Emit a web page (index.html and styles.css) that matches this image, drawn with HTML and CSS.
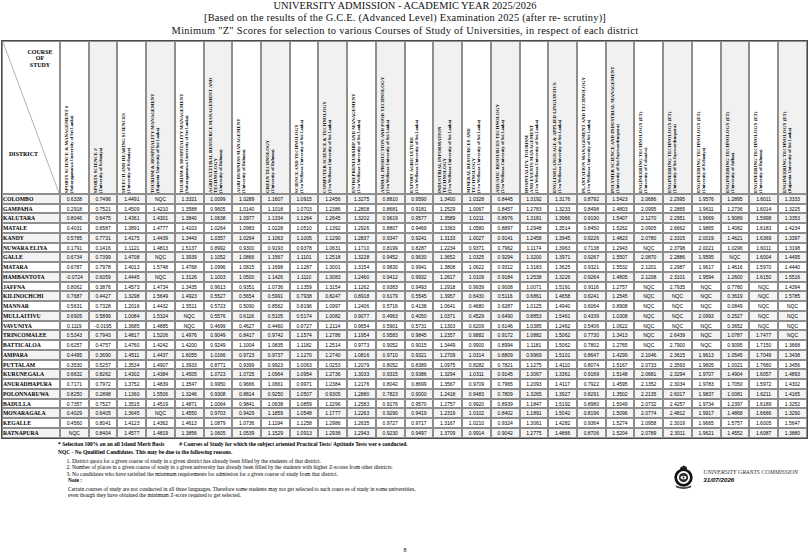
FILE: index.html
```html
<!DOCTYPE html>
<html>
<head>
<meta charset="utf-8">
<link rel="stylesheet" href="styles.css">
</head>
<body>
<div class="page">
  <div class="title">
    <div class="t1">UNIVERSITY ADMISSION - ACADEMIC YEAR 2025/2026</div>
    <div class="t2">[Based on the results of the G.C.E. (Advanced Level) Examination 2025 (after re- scrutiny)]</div>
    <div class="t3">Minimum "Z" Scores for selection to various Courses of Study of Universities, in respect of each district</div>
  </div>
  <table class="z">
    <colgroup><col class="cdist"><col span="26"></colgroup>
    <thead>
      <tr class="hd">
        <th class="corner">
          <svg class="diag" viewBox="0 0 58 153" preserveAspectRatio="none"><line x1="0" y1="0" x2="58" y2="153" stroke="#9a9a9a" stroke-width="0.8"/></svg>
          <div class="cinner">
            <div class="cos">COURSE<br>OF<br>STUDY</div>
            <div class="dis">DISTRICT</div>
          </div>
        </th>
        <th><div class="rot">SPORTS SCIENCE &amp; MANAGEMENT #<br><span class="u">(Sabaragamuwa University of Sri Lanka)</span></div></th>
        <th class="g"><div class="rot">SPORTS SCIENCE #<br><span class="u">(University of Kelaniya)</span></div></th>
        <th><div class="rot">SPEECH AND HEARING SCIENCES<br><span class="u">(University of Kelaniya)</span></div></th>
        <th class="g"><div class="rot">TOURISM &amp; HOSPITALITY MANAGEMENT<br><span class="u">(Rajarata University of Sri Lanka)</span></div></th>
        <th><div class="rot">TOURISM &amp; HOSPITALITY MANAGEMENT<br><span class="u">(Sabaragamuwa University of Sri Lanka)</span></div></th>
        <th class="g"><div class="rot">AGRICULTURAL RESOURCE MANAGEMENT AND<br>TECHNOLOGY<br><span class="u">(University of Ruhuna)</span></div></th>
        <th><div class="rot">AGRI BUSINESS MANAGEMENT<br><span class="u">(University of Ruhuna)</span></div></th>
        <th class="g"><div class="rot">GREEN TECHNOLOGY<br><span class="u">(University of Ruhuna)</span></div></th>
        <th><div class="rot">SCIENCE AND TECHNOLOGY<br><span class="u">(Uva Wellassa University of Sri Lanka)</span></div></th>
        <th class="g"><div class="rot">COMPUTER SCIENCE &amp; TECHNOLOGY<br><span class="u">(Uva Wellassa University of Sri Lanka)</span></div></th>
        <th><div class="rot">ENTREPRENEURSHIP AND MANAGEMENT<br><span class="u">(Uva Wellassa University of Sri Lanka)</span></div></th>
        <th class="g"><div class="rot">ANIMAL PRODUCTION AND FOOD TECHNOLOGY<br><span class="u">(Uva Wellassa University of Sri Lanka)</span></div></th>
        <th><div class="rot">EXPORT AGRICULTURE<br><span class="u">(Uva Wellassa University of Sri Lanka)</span></div></th>
        <th class="g"><div class="rot">INDUSTRIAL INFORMATION<br>TECHNOLOGY<br><span class="u">(Uva Wellassa University of Sri Lanka)</span></div></th>
        <th><div class="rot">MINERAL RESOURCES AND<br>TECHNOLOGY<br><span class="u">(Uva Wellassa University of Sri Lanka)</span></div></th>
        <th class="g"><div class="rot">AQUATIC RESOURCES TECHNOLOGY<br><span class="u">(Uva Wellassa University of Sri Lanka)</span></div></th>
        <th><div class="rot">HOSPITALITY, TOURISM<br>AND EVENTS MANAGEMENT<br><span class="u">(Uva Wellassa University of Sri Lanka)</span></div></th>
        <th class="g"><div class="rot">ENGLISH LANGUAGE &amp; APPLIED LINGUISTICS<br><span class="u">(Uva Wellassa University of Sri Lanka)</span></div></th>
        <th><div class="rot">PLANTATION MANAGEMENT AND TECHNOLOGY<br><span class="u">(Uva Wellassa University of Sri Lanka)</span></div></th>
        <th class="g"><div class="rot">POLYMER SCIENCE AND INDUSTRIAL MANAGEMENT<br><span class="u">(University of Sri Jayewardenepura)</span></div></th>
        <th><div class="rot">ENGINEERING TECHNOLOGY (ET)<br><span class="u">(University of Colombo)</span></div></th>
        <th class="g"><div class="rot">ENGINEERING TECHNOLOGY (ET)<br><span class="u">(University of Sri Jayewardenepura)</span></div></th>
        <th><div class="rot">ENGINEERING TECHNOLOGY (ET)<br><span class="u">(University of Kelaniya)</span></div></th>
        <th class="g"><div class="rot">ENGINEERING TECHNOLOGY (ET)<br><span class="u">(University of Jaffna)</span></div></th>
        <th><div class="rot">ENGINEERING TECHNOLOGY (ET)<br><span class="u">(University of Ruhuna)</span></div></th>
        <th class="g"><div class="rot">ENGINEERING TECHNOLOGY (ET)<br><span class="u">(Rajarata University of Sri Lanka)</span></div></th>
      </tr>
    </thead>
    <tbody>
      <tr><th>COLOMBO</th><td>0.6338</td><td>0.7496</td><td>1.4491</td><td>NQC</td><td>1.3321</td><td>1.0099</td><td>1.0289</td><td>1.1607</td><td>1.0915</td><td>1.2456</td><td>1.3275</td><td>0.8810</td><td>0.9590</td><td>1.3400</td><td>1.0328</td><td>0.8445</td><td>1.3192</td><td>1.3176</td><td>0.8792</td><td>1.5423</td><td>2.0686</td><td>2.2995</td><td>1.9576</td><td>1.2895</td><td>1.6011</td><td>1.3333</td></tr>
      <tr><th>GAMPAHA</th><td>0.2918</td><td>0.7521</td><td>1.4509</td><td>1.4210</td><td>1.3588</td><td>0.9605</td><td>1.0140</td><td>1.1018</td><td>1.0703</td><td>1.2386</td><td>1.2808</td><td>0.8681</td><td>0.9181</td><td>1.2529</td><td>1.0067</td><td>0.8457</td><td>1.2783</td><td>1.3233</td><td>0.8498</td><td>1.4803</td><td>2.0995</td><td>2.2865</td><td>1.9611</td><td>1.2736</td><td>1.6014</td><td>1.3225</td></tr>
      <tr><th>KALUTARA</th><td>0.8046</td><td>0.6475</td><td>1.4361</td><td>1.4301</td><td>1.3840</td><td>1.0638</td><td>1.0977</td><td>1.1334</td><td>1.1264</td><td>1.2645</td><td>1.3202</td><td>0.9619</td><td>0.9577</td><td>1.3589</td><td>1.0211</td><td>0.8976</td><td>1.3181</td><td>1.3966</td><td>0.9190</td><td>1.5407</td><td>2.1270</td><td>2.2951</td><td>1.9669</td><td>1.9089</td><td>1.5998</td><td>1.3353</td></tr>
      <tr><th>MATALE</th><td>0.4031</td><td>0.6587</td><td>1.3891</td><td>1.4777</td><td>1.4103</td><td>1.0264</td><td>1.0983</td><td>1.0228</td><td>1.0510</td><td>1.1392</td><td>1.2926</td><td>0.8807</td><td>0.9469</td><td>1.3363</td><td>1.0580</td><td>0.8897</td><td>1.2948</td><td>1.3514</td><td>0.8450</td><td>1.5262</td><td>2.0905</td><td>2.6662</td><td>1.9865</td><td>1.4082</td><td>1.6183</td><td>1.4234</td></tr>
      <tr><th>KANDY</th><td>0.5785</td><td>0.7731</td><td>1.4175</td><td>1.4439</td><td>1.3443</td><td>1.0357</td><td>1.0264</td><td>1.1063</td><td>1.1005</td><td>1.1290</td><td>1.2837</td><td>0.9347</td><td>0.9241</td><td>1.3133</td><td>1.0027</td><td>0.9141</td><td>1.2458</td><td>1.3945</td><td>0.9226</td><td>1.4823</td><td>2.0780</td><td>2.3315</td><td>2.0019</td><td>1.4621</td><td>1.6369</td><td>1.3397</td></tr>
      <tr><th>NUWARA ELIYA</th><td>0.1791</td><td>0.1416</td><td>1.1121</td><td>1.4813</td><td>1.5137</td><td>0.8992</td><td>0.9300</td><td>0.9193</td><td>0.9378</td><td>1.0631</td><td>1.1710</td><td>0.8199</td><td>0.8287</td><td>1.2234</td><td>0.9371</td><td>0.7962</td><td>1.1174</td><td>1.3963</td><td>0.7138</td><td>1.2943</td><td>NQC</td><td>2.3798</td><td>2.0021</td><td>1.0296</td><td>1.6011</td><td>1.3198</td></tr>
      <tr><th>GALLE</th><td>0.6734</td><td>0.7399</td><td>1.4708</td><td>NQC</td><td>1.3939</td><td>1.1052</td><td>1.0866</td><td>1.1567</td><td>1.1101</td><td>1.2518</td><td>1.3228</td><td>0.9452</td><td>0.9630</td><td>1.3652</td><td>1.0325</td><td>0.9294</td><td>1.3200</td><td>1.3971</td><td>0.9267</td><td>1.5507</td><td>2.0870</td><td>2.2886</td><td>1.9595</td><td>NQC</td><td>1.6004</td><td>1.4495</td></tr>
      <tr><th>MATARA</th><td>0.6787</td><td>0.7978</td><td>1.4013</td><td>1.5748</td><td>1.4768</td><td>1.0996</td><td>1.0815</td><td>1.1698</td><td>1.1287</td><td>1.3001</td><td>1.3154</td><td>0.9830</td><td>0.9941</td><td>1.3808</td><td>1.0622</td><td>0.9312</td><td>1.3183</td><td>1.3625</td><td>0.9321</td><td>1.5532</td><td>2.1201</td><td>2.2987</td><td>1.9617</td><td>1.4616</td><td>1.5970</td><td>1.4440</td></tr>
      <tr><th>HAMBANTOTA</th><td>-0.0724</td><td>0.6059</td><td>1.4445</td><td>NQC</td><td>1.3126</td><td>1.1003</td><td>1.0500</td><td>1.1426</td><td>1.1110</td><td>1.3083</td><td>1.2460</td><td>0.9412</td><td>0.9932</td><td>1.2617</td><td>1.0109</td><td>0.9184</td><td>1.2538</td><td>1.3226</td><td>0.9264</td><td>1.4805</td><td>2.1208</td><td>2.3101</td><td>1.9594</td><td>1.2600</td><td>1.6150</td><td>1.5516</td></tr>
      <tr><th>JAFFNA</th><td>0.8062</td><td>0.3876</td><td>1.4573</td><td>1.4734</td><td>1.3435</td><td>0.9613</td><td>0.9351</td><td>1.0736</td><td>1.1359</td><td>1.3154</td><td>1.1262</td><td>0.9383</td><td>0.9493</td><td>1.2918</td><td>0.9939</td><td>0.9008</td><td>1.0071</td><td>1.5191</td><td>0.9116</td><td>1.2757</td><td>NQC</td><td>2.7935</td><td>NQC</td><td>0.7780</td><td>NQC</td><td>1.4394</td></tr>
      <tr><th>KILINOCHCHI</th><td>0.7687</td><td>0.4427</td><td>1.3298</td><td>1.5649</td><td>1.4923</td><td>0.5527</td><td>0.5654</td><td>0.5991</td><td>0.7938</td><td>0.8247</td><td>0.8918</td><td>0.6179</td><td>0.5545</td><td>1.3957</td><td>0.6430</td><td>0.5116</td><td>0.6861</td><td>1.4658</td><td>0.6241</td><td>1.2545</td><td>NQC</td><td>NQC</td><td>NQC</td><td>0.3619</td><td>NQC</td><td>1.5785</td></tr>
      <tr><th>MANNAR</th><td>0.5631</td><td>0.7328</td><td>1.2016</td><td>1.4432</td><td>1.5511</td><td>0.5723</td><td>0.5090</td><td>0.8562</td><td>0.8196</td><td>1.0997</td><td>1.2406</td><td>0.5716</td><td>0.4138</td><td>1.0641</td><td>0.4680</td><td>0.6287</td><td>1.0125</td><td>1.4940</td><td>0.6064</td><td>0.8908</td><td>NQC</td><td>NQC</td><td>NQC</td><td>0.0849</td><td>NQC</td><td>NQC</td></tr>
      <tr><th>MULLAITIVU</th><td>0.6905</td><td>0.5899</td><td>1.0084</td><td>1.5324</td><td>NQC</td><td>0.5576</td><td>0.6116</td><td>0.5105</td><td>0.5174</td><td>1.0082</td><td>0.9077</td><td>0.4963</td><td>0.4050</td><td>1.0371</td><td>0.4529</td><td>0.6490</td><td>0.8853</td><td>1.5461</td><td>0.4339</td><td>1.0308</td><td>NQC</td><td>NQC</td><td>2.0993</td><td>0.2527</td><td>NQC</td><td>NQC</td></tr>
      <tr><th>VAVUNIYA</th><td>0.1119</td><td>-0.0195</td><td>1.3685</td><td>1.4885</td><td>NQC</td><td>0.4699</td><td>0.4627</td><td>0.4460</td><td>0.9727</td><td>1.2114</td><td>0.9654</td><td>0.5901</td><td>0.5731</td><td>1.1303</td><td>0.6209</td><td>0.6146</td><td>1.0385</td><td>1.2462</td><td>0.5406</td><td>1.0622</td><td>NQC</td><td>NQC</td><td>NQC</td><td>0.3652</td><td>NQC</td><td>NQC</td></tr>
      <tr><th>TRINCOMALEE</th><td>0.5343</td><td>0.7943</td><td>1.4817</td><td>1.5206</td><td>1.4976</td><td>0.9049</td><td>0.8417</td><td>0.9742</td><td>1.1574</td><td>1.2786</td><td>1.1954</td><td>0.9583</td><td>0.9845</td><td>1.2357</td><td>0.9882</td><td>0.9172</td><td>1.0882</td><td>1.5062</td><td>0.7730</td><td>1.3413</td><td>NQC</td><td>2.6439</td><td>NQC</td><td>1.0787</td><td>1.7477</td><td>NQC</td></tr>
      <tr><th>BATTICALOA</th><td>0.6257</td><td>0.4757</td><td>1.4760</td><td>1.4242</td><td>1.4200</td><td>0.9249</td><td>1.1004</td><td>1.0835</td><td>1.1182</td><td>1.2514</td><td>0.9773</td><td>0.9052</td><td>0.9015</td><td>1.3449</td><td>0.9900</td><td>0.8994</td><td>1.1181</td><td>1.5062</td><td>0.7802</td><td>1.2765</td><td>NQC</td><td>2.7900</td><td>NQC</td><td>0.9095</td><td>1.7150</td><td>1.3668</td></tr>
      <tr><th>AMPARA</th><td>0.4495</td><td>0.3690</td><td>1.4511</td><td>1.4437</td><td>1.6055</td><td>1.0166</td><td>0.9723</td><td>0.9737</td><td>1.1270</td><td>1.2740</td><td>1.0816</td><td>0.9710</td><td>0.9321</td><td>1.2709</td><td>1.0314</td><td>0.8809</td><td>0.9969</td><td>1.5101</td><td>0.8647</td><td>1.4299</td><td>2.1046</td><td>2.3615</td><td>1.9613</td><td>1.0545</td><td>1.7049</td><td>1.3438</td></tr>
      <tr><th>PUTTALAM</th><td>0.3530</td><td>0.5257</td><td>1.3534</td><td>1.4907</td><td>1.3933</td><td>0.8771</td><td>0.9399</td><td>0.9923</td><td>1.0063</td><td>1.0253</td><td>1.2079</td><td>0.8052</td><td>0.8389</td><td>1.0975</td><td>0.8282</td><td>0.7821</td><td>1.1275</td><td>1.4110</td><td>0.8074</td><td>1.5167</td><td>2.0733</td><td>2.3593</td><td>1.9605</td><td>1.0021</td><td>1.7660</td><td>1.3456</td></tr>
      <tr><th>KURUNEGALA</th><td>0.6632</td><td>0.8262</td><td>1.4302</td><td>1.4384</td><td>1.4505</td><td>1.0723</td><td>1.0725</td><td>1.0964</td><td>1.0954</td><td>1.2736</td><td>1.3033</td><td>0.9315</td><td>0.9386</td><td>1.3294</td><td>1.0311</td><td>0.9145</td><td>1.3067</td><td>1.3361</td><td>0.9169</td><td>1.5148</td><td>2.0681</td><td>2.3294</td><td>1.9707</td><td>1.4904</td><td>1.6057</td><td>1.4893</td></tr>
      <tr><th>ANURADHAPURA</th><td>0.7171</td><td>0.7972</td><td>1.3752</td><td>1.4839</td><td>1.3547</td><td>0.9950</td><td>0.9666</td><td>1.0661</td><td>0.9971</td><td>1.2384</td><td>1.2176</td><td>0.8042</td><td>0.8699</td><td>1.3567</td><td>0.9709</td><td>0.7965</td><td>1.2093</td><td>1.4117</td><td>0.7922</td><td>1.4595</td><td>2.1352</td><td>2.3034</td><td>1.9783</td><td>1.7050</td><td>1.5972</td><td>1.4302</td></tr>
      <tr><th>POLONNARUWA</th><td>0.8250</td><td>0.2898</td><td>1.1360</td><td>1.5506</td><td>1.3246</td><td>0.9308</td><td>0.8814</td><td>0.9250</td><td>1.0507</td><td>0.9305</td><td>1.2880</td><td>0.7823</td><td>0.9000</td><td>1.2418</td><td>0.9483</td><td>0.7809</td><td>1.3265</td><td>1.3927</td><td>0.8291</td><td>1.3502</td><td>2.2135</td><td>2.6017</td><td>1.9837</td><td>1.0081</td><td>1.6211</td><td>1.4165</td></tr>
      <tr><th>BADULLA</th><td>0.7357</td><td>0.7527</td><td>1.3515</td><td>1.4519</td><td>1.4871</td><td>1.0064</td><td>0.9841</td><td>1.0638</td><td>1.0859</td><td>1.2296</td><td>1.2583</td><td>0.9176</td><td>0.9570</td><td>1.2757</td><td>0.9920</td><td>0.8939</td><td>1.1847</td><td>1.5192</td><td>0.8980</td><td>1.5049</td><td>2.0732</td><td>2.4257</td><td>1.9734</td><td>1.2397</td><td>1.6189</td><td>1.3252</td></tr>
      <tr><th>MONARAGALA</th><td>0.4029</td><td>0.6405</td><td>1.3645</td><td>NQC</td><td>1.4550</td><td>0.9703</td><td>0.9429</td><td>1.1859</td><td>1.0548</td><td>1.1777</td><td>1.2263</td><td>0.9290</td><td>0.9419</td><td>1.2319</td><td>1.0102</td><td>0.8402</td><td>1.1891</td><td>1.5042</td><td>0.8196</td><td>1.5096</td><td>2.0774</td><td>2.4812</td><td>1.9917</td><td>1.4868</td><td>1.6666</td><td>1.3290</td></tr>
      <tr><th>KEGALLE</th><td>0.4560</td><td>0.8041</td><td>1.4123</td><td>1.4362</td><td>1.4613</td><td>1.0879</td><td>1.0736</td><td>1.1194</td><td>1.1258</td><td>1.2986</td><td>1.2635</td><td>0.9727</td><td>0.9717</td><td>1.3167</td><td>1.0210</td><td>0.9324</td><td>1.3061</td><td>1.4282</td><td>0.9364</td><td>1.5274</td><td>2.0958</td><td>2.3019</td><td>1.9665</td><td>1.5757</td><td>1.6005</td><td>1.5647</td></tr>
      <tr><th>RATNAPURA</th><td>NQC</td><td>0.8404</td><td>1.4577</td><td>1.4819</td><td>1.3856</td><td>1.0605</td><td>1.0539</td><td>1.1529</td><td>1.0913</td><td>1.2936</td><td>1.2943</td><td>0.9230</td><td>0.9497</td><td>1.3709</td><td>0.9914</td><td>0.9042</td><td>1.2775</td><td>1.4866</td><td>0.8706</td><td>1.5204</td><td>2.0789</td><td>2.3011</td><td>1.9621</td><td>1.4552</td><td>1.6087</td><td>1.3880</td></tr>
    </tbody>
  </table>
  <div class="foot">
    <div class="notes">
      <p class="b sel"><span>* Selection 100% on an all Island Merit Basis</span><span class="hash"># Courses of Study for which the subject oriented Practical Tests/ Aptitude Tests wer e conducted.</span></p>
      <p class="b nqc">NQC - No Qualified Candidates. This may be due to the following reasons.</p>
      <ol class="reasons">
        <li>District quota for a given course of study in a given district has already been filled by the students of that district.</li>
        <li>Number of places in a given course of study in a given university has already been filled by the students with higher Z-scores from other districts.</li>
        <li>No candidates who have satisfied the minimum requirements for admission for a given course of study from that district.</li>
      </ol>
      <p class="b note">Note :</p>
      <p class="ntext">Certain courses of study are not conducted in all three languages. Therefore some students may not get selected to such cours es of study in some universities,<br>even though they have obtained the minimum Z-score required to get selected.</p>
    </div>
    <div class="ugc">
      <svg class="logo" viewBox="0 0 22 24" width="23" height="25">
        <path d="M7.5 5 Q8 1.8 10 2.4 Q11 0.8 12.4 2.2 Q14.2 1.6 14.5 4.5 L13.2 5.6 L8.8 5.6 Z" fill="#222"/>
        <circle cx="11" cy="13" r="8.8" fill="#111"/>
        <circle cx="11" cy="13" r="6.2" fill="#fff"/>
        <circle cx="11" cy="13" r="4.4" fill="#2a2a2a"/>
        <ellipse cx="11" cy="13" rx="2.8" ry="1.7" fill="#fff"/>
        <circle cx="11" cy="13" r="0.9" fill="#111"/>
        <path d="M3.5 20.3 Q11 24.2 18.5 20.3 L18 22.6 Q11 25.4 4 22.6 Z" fill="#444"/>
      </svg>
      <div class="ugctext">
        <div class="ugcname">UNIVERSITY GRANTS COMMISSION</div>
        <div class="ugcdate">31/07/2026</div>
      </div>
    </div>
  </div>
  <div class="pageno">8</div>
</div>
</body>
</html>
```

FILE: styles.css
```css
html, body {
  margin: 0;
  padding: 0;
  background: #fff;
}
body {
  font-family: "Liberation Serif", "Times New Roman", serif;
  color: #000;
}
.page {
  width: 810px;
  height: 556px;
  display: flex;
  flex-direction: column;
  overflow: hidden;
}
.title {
  text-align: center;
  font-size: 10.4px;
  line-height: 12.3px;
  margin: 0 0 3px 0;
  padding-top: 0;
  color: #111;
}
.title .t2 {
  letter-spacing: 0.2px;
}
.title .t3 {
  letter-spacing: 0.3px;
}
table.z {
  margin-left: 1px;
  width: 807px;
  table-layout: fixed;
  border-collapse: separate;
  border-spacing: 0;
  border: 1px solid #4a4a4a;
}
col.cdist {
  width: 58px;
}
table.z th, table.z td {
  border: 0.75px solid #8f8f8f;
  padding: 0;
}
tr.hd {
  height: 153px;
}
tr.hd th {
  vertical-align: bottom;
  text-align: left;
  background: #fff;
}
tr.hd th.g {
  background: #f1f1f1;
}
.rot {
  writing-mode: vertical-rl;
  transform: rotate(180deg);
  height: 150px;
  padding-right: 3px;
  font-size: 4.8px;
  line-height: 5.1px;
  font-weight: bold;
  white-space: nowrap;
  text-align: start;
}
.rot .u {
  font-size: 4.4px;
}
th.corner {
  position: relative;
  vertical-align: top;
}
.diag {
  position: absolute;
  left: 0;
  top: 0;
  width: 100%;
  height: 100%;
}
.cinner {
  height: 151px;
  display: flex;
  flex-direction: column;
  justify-content: space-between;
  font-size: 6px;
  font-weight: bold;
}
.cos {
  text-align: center;
  line-height: 6.6px;
  padding: 7px 0 0 18px;
}
.dis {
  padding: 0 0 36px 6px;
}
tbody tr {
  height: 9.76px;
}
tbody th {
  text-align: left;
  font-size: 5.7px;
  font-weight: bold;
  padding-left: 2px;
  line-height: 6px;
  white-space: nowrap;
}
tbody td {
  text-align: center;
  font-family: "Liberation Sans", Arial, sans-serif;
  font-size: 5px;
  line-height: 6px;
}
tbody tr:nth-child(odd) th, tbody tr:nth-child(odd) td {
  background: #f3f3f3;
}
.foot {
  display: flex;
  justify-content: space-between;
  padding-left: 58px;
}
.notes {
  font-size: 5.5px;
  line-height: 6.5px;
  padding-top: 2px;
}
.notes p {
  margin: 0;
}
.b {
  font-weight: bold;
}
.sel .hash {
  margin-left: 15px;
}
.nqc {
  margin-top: 2px !important;
}
.reasons {
  margin: 2px 0 0 0;
  padding-left: 14px;
}
.note {
  padding-left: 10px;
  margin-top: 0 !important;
}
.ntext {
  padding-left: 10px;
  margin-top: 2px !important;
}
.ugc {
  display: flex;
  align-items: center;
  margin: 25px 12px 0 0;
  align-self: flex-start;
}
.logo {
  display: block;
  margin-right: 8px;
}
.ugcname {
  font-style: italic;
  font-size: 6px;
  line-height: 8px;
  color: #333;
}
.ugcdate {
  font-style: italic;
  font-weight: bold;
  font-size: 6.2px;
  line-height: 8px;
  font-family: "Liberation Sans", Arial, sans-serif;
}
.pageno {
  margin-top: auto;
  text-align: center;
  font-size: 6px;
  line-height: 8px;
  padding-bottom: 2px;
}
```
